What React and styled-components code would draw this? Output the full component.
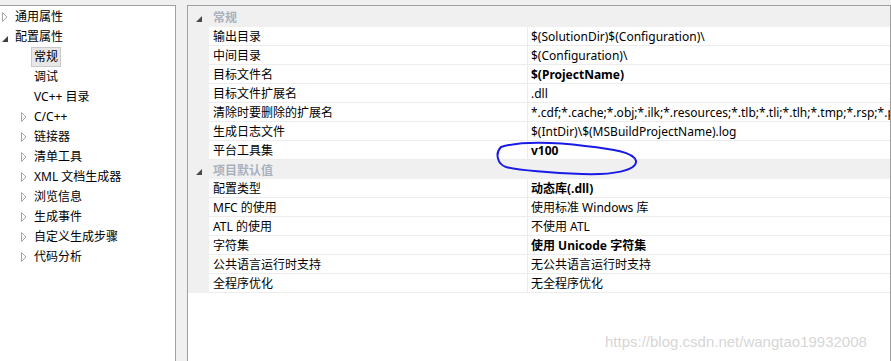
import React from "react";
import styled, { createGlobalStyle } from "styled-components";

const GlobalStyle = createGlobalStyle`
  html, body {
    margin: 0;
    padding: 0;
    background: #f0f0f0;
  }
  body {
    font-family: "Noto Sans", "Noto Sans CJK SC", sans-serif;
    font-size: 12px;
    color: #000;
  }
`;

const Page = styled.div`
  position: relative;
  display: flex;
  width: 891px;
  height: 361px;
  padding-top: 5px;
  box-sizing: border-box;
  overflow: hidden;
  background: #f0f0f0;
`;

/* ---------- left tree ---------- */

const TreePanel = styled.div`
  width: 176px;
  flex-shrink: 0;
  background: #fff;
  border-top: 1px solid #a0a0a0;
  border-right: 1px solid #a0a0a0;
  box-sizing: border-box;
  padding-top: 1px;
`;

const TreeRow = styled.div`
  display: flex;
  align-items: center;
  height: 20px;
  padding-left: ${(p) => (p.level === 0 ? 0 : 19)}px;
  white-space: nowrap;
`;

const Expander = styled.span`
  display: flex;
  align-items: center;
  justify-content: center;
  width: 10px;
  height: 20px;
  margin-right: 1px;
`;

const TreeLabel = styled.span`
  padding: 1px 2px;
  margin-left: 1px;
  line-height: 16px;
  border: 1px solid ${(p) => (p.selected ? "#c9c9c9" : "transparent")};
  background: ${(p) => (p.selected ? "#e7e7e7" : "transparent")};
`;

const Collapsed = () => (
  <svg width="6" height="10" viewBox="0 0 6 10">
    <polygon points="0.5,0.5 5,5 0.5,9.5" fill="#fff" stroke="#a6a6a6" />
  </svg>
);

const Expanded = ({ color = "#404040" }) => (
  <svg width="6" height="6" viewBox="0 0 6 6" style={{ marginTop: 4 }}>
    <polygon points="6,0 6,6 0,6" fill={color} />
  </svg>
);

const tree = [
  { label: "通用属性", level: 0, state: "collapsed" },
  { label: "配置属性", level: 0, state: "expanded" },
  { label: "常规", level: 1, selected: true },
  { label: "调试", level: 1 },
  { label: "VC++ 目录", level: 1 },
  { label: "C/C++", level: 1, state: "collapsed" },
  { label: "链接器", level: 1, state: "collapsed" },
  { label: "清单工具", level: 1, state: "collapsed" },
  { label: "XML 文档生成器", level: 1, state: "collapsed" },
  { label: "浏览信息", level: 1, state: "collapsed" },
  { label: "生成事件", level: 1, state: "collapsed" },
  { label: "自定义生成步骤", level: 1, state: "collapsed" },
  { label: "代码分析", level: 1, state: "collapsed" },
];

/* ---------- property grid ---------- */

const PropsPanel = styled.div`
  width: 704px;
  margin-left: 11px;
  flex-shrink: 0;
  background: #fff;
  border-top: 1px solid #a0a0a0;
  border-left: 1px solid #a0a0a0;
  border-right: 1px solid #a0a0a0;
  box-sizing: border-box;
`;

const SectionHeader = styled.div`
  display: grid;
  grid-template-columns: 21px 1fr;
  height: ${(p) => p.h}px;
  background: #f0f0f0;
  align-items: center;
`;

const HeaderTitle = styled.span`
  padding-left: 4px;
  color: #aab1bd;
  font-weight: bold;
`;

const Gutter = styled.span`
  display: flex;
  justify-content: center;
  align-items: center;
  height: 100%;
  background: #f0f0f0;
`;

const PropRow = styled.div`
  display: grid;
  grid-template-columns: 21px 319px 1fr;
  height: 19px;
`;

const Cell = styled.span`
  display: flex;
  align-items: center;
  border-bottom: 1px solid #ececec;
  white-space: nowrap;
  overflow: hidden;
`;

const NameCell = styled(Cell)`
  padding-left: 4px;
  border-right: 1px solid #ececec;
`;

const ValueCell = styled(Cell)`
  padding-left: 3px;
  font-weight: ${(p) => (p.bold ? "bold" : "normal")};
`;

const general = [
  ["输出目录", "$(SolutionDir)$(Configuration)\\"],
  ["中间目录", "$(Configuration)\\"],
  ["目标文件名", "$(ProjectName)", true],
  ["目标文件扩展名", ".dll"],
  [
    "清除时要删除的扩展名",
    "*.cdf;*.cache;*.obj;*.ilk;*.resources;*.tlb;*.tli;*.tlh;*.tmp;*.rsp;*.pgc;*.pgd;*.meta;$(TargetPath)",
  ],
  ["生成日志文件", "$(IntDir)\\$(MSBuildProjectName).log"],
  ["平台工具集", "v100", true],
];

const defaults = [
  ["配置类型", "动态库(.dll)", true],
  ["MFC 的使用", "使用标准 Windows 库"],
  ["ATL 的使用", "不使用 ATL"],
  ["字符集", "使用 Unicode 字符集", true],
  ["公共语言运行时支持", "无公共语言运行时支持"],
  ["全程序优化", "无全程序优化"],
];

/* ---------- overlays ---------- */

const Scribble = styled.svg`
  position: absolute;
  left: 0;
  top: 0;
  pointer-events: none;
`;

const Watermark = styled.div`
  position: absolute;
  left: 605px;
  top: 333px;
  font-family: "Liberation Sans", Arial, sans-serif;
  font-size: 15px;
  color: #d6d6d6;
  white-space: nowrap;
`;

const Section = ({ title, h, rows }) => (
  <>
    <SectionHeader h={h}>
      <Gutter>
        <Expanded color="#4a4a4a" />
      </Gutter>
      <HeaderTitle>{title}</HeaderTitle>
    </SectionHeader>
    {rows.map(([name, value, bold]) => (
      <PropRow key={name}>
        <Gutter />
        <NameCell>{name}</NameCell>
        <ValueCell bold={bold}>{value}</ValueCell>
      </PropRow>
    ))}
  </>
);

export default function App() {
  return (
    <>
      <GlobalStyle />
      <Page>
        <TreePanel>
          {tree.map((item) => (
            <TreeRow key={item.label} level={item.level}>
              <Expander>
                {item.state === "collapsed" && <Collapsed />}
                {item.state === "expanded" && <Expanded />}
              </Expander>
              <TreeLabel selected={item.selected}>{item.label}</TreeLabel>
            </TreeRow>
          ))}
        </TreePanel>
        <PropsPanel>
          <Section title="常规" h={21} rows={general} />
          <Section title="项目默认值" h={19} rows={defaults} />
        </PropsPanel>

        <Scribble width="891" height="361">
          <path
            d="M 501 147 C 520 141, 555 142, 585 146 C 612 149, 634 152, 636 161 C 637 171, 612 175, 582 174 C 552 173, 518 170, 506 167 C 497 164, 495 153, 501 147"
            fill="none"
            stroke="#1a1ae6"
            strokeWidth="2"
            strokeLinecap="round"
          />
        </Scribble>
        <Watermark>https://blog.csdn.net/wangtao19932008</Watermark>
      </Page>
    </>
  );
}
